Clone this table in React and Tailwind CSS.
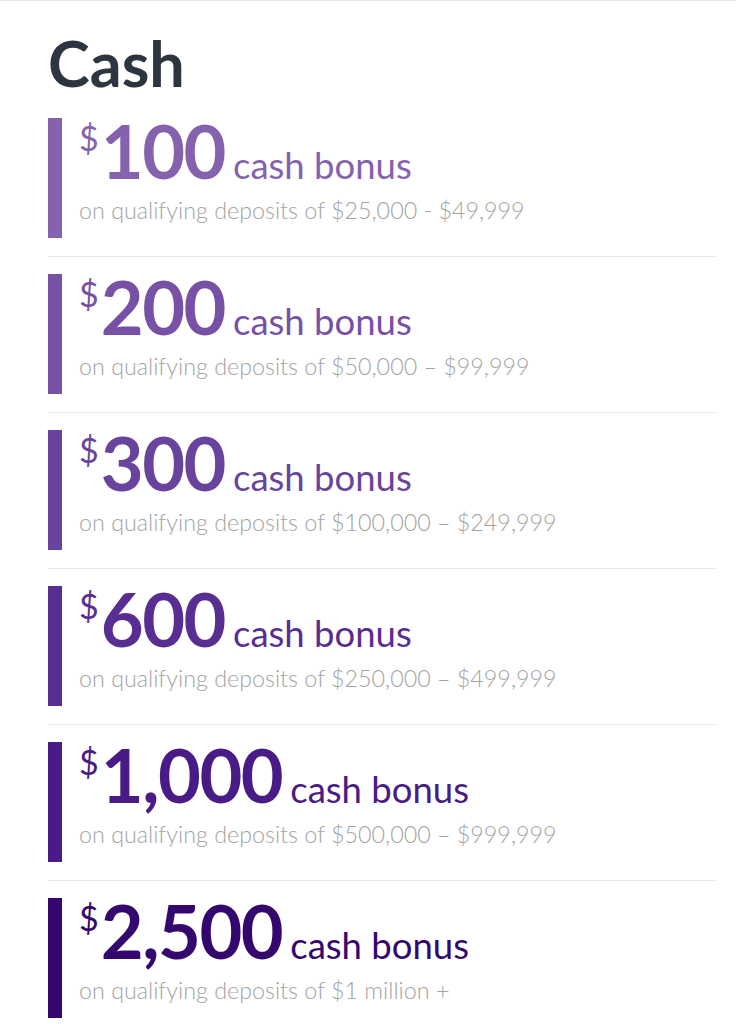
const tiers = [
  { amount: '100', range: 'on qualifying deposits of $25,000 - $49,999', color: 'text-[#8562ae]', bar: 'bg-[#8562ae]' },
  { amount: '200', range: 'on qualifying deposits of $50,000 – $99,999', color: 'text-[#7651a6]', bar: 'bg-[#7651a6]' },
  { amount: '300', range: 'on qualifying deposits of $100,000 – $249,999', color: 'text-[#68449c]', bar: 'bg-[#68449c]' },
  { amount: '600', range: 'on qualifying deposits of $250,000 – $499,999', color: 'text-[#592e93]', bar: 'bg-[#592e93]' },
  { amount: '1,000', range: 'on qualifying deposits of $500,000 – $999,999', color: 'text-[#491b86]', bar: 'bg-[#491b86]' },
  { amount: '2,500', range: 'on qualifying deposits of $1 million +', color: 'text-[#34076f]', bar: 'bg-[#34076f]' },
];

function Tier({ tier, last }) {
  return (
    <div>
      <div className="flex gap-[17px]">
        <div className={`w-[14px] h-[120px] shrink-0 ${tier.bar}`} />
        <div className="flex flex-col">
          <div className={`flex items-baseline ${tier.color}`}>
            <span className="self-start mt-[3px] text-[34px] leading-none">$</span>
            <span className="ml-[2px] text-[74px] font-bold leading-[0.9] tracking-[-1.5px]">{tier.amount}</span>
            <span className="ml-2 text-[36.5px] leading-none">cash bonus</span>
          </div>
          <div className="mt-3 text-[23.3px] font-light leading-[1.2] text-[#a3a3a3]">{tier.range}</div>
        </div>
      </div>
      {!last && <div className="mt-[18px] mb-[17px] h-px bg-[#e8e9ee]" />}
    </div>
  );
}

export default function App() {
  return (
    <div className="min-h-screen bg-white border-t border-[#e8e9ee] pl-12 pr-5 font-['Lato',sans-serif]">
      <h1 className="pt-[30px] text-[63px] font-bold leading-none text-[#2d3540]">Cash</h1>
      <div className="mt-6">
        {tiers.map((tier, i) => (
          <Tier key={tier.amount} tier={tier} last={i === tiers.length - 1} />
        ))}
      </div>
    </div>
  );
}
